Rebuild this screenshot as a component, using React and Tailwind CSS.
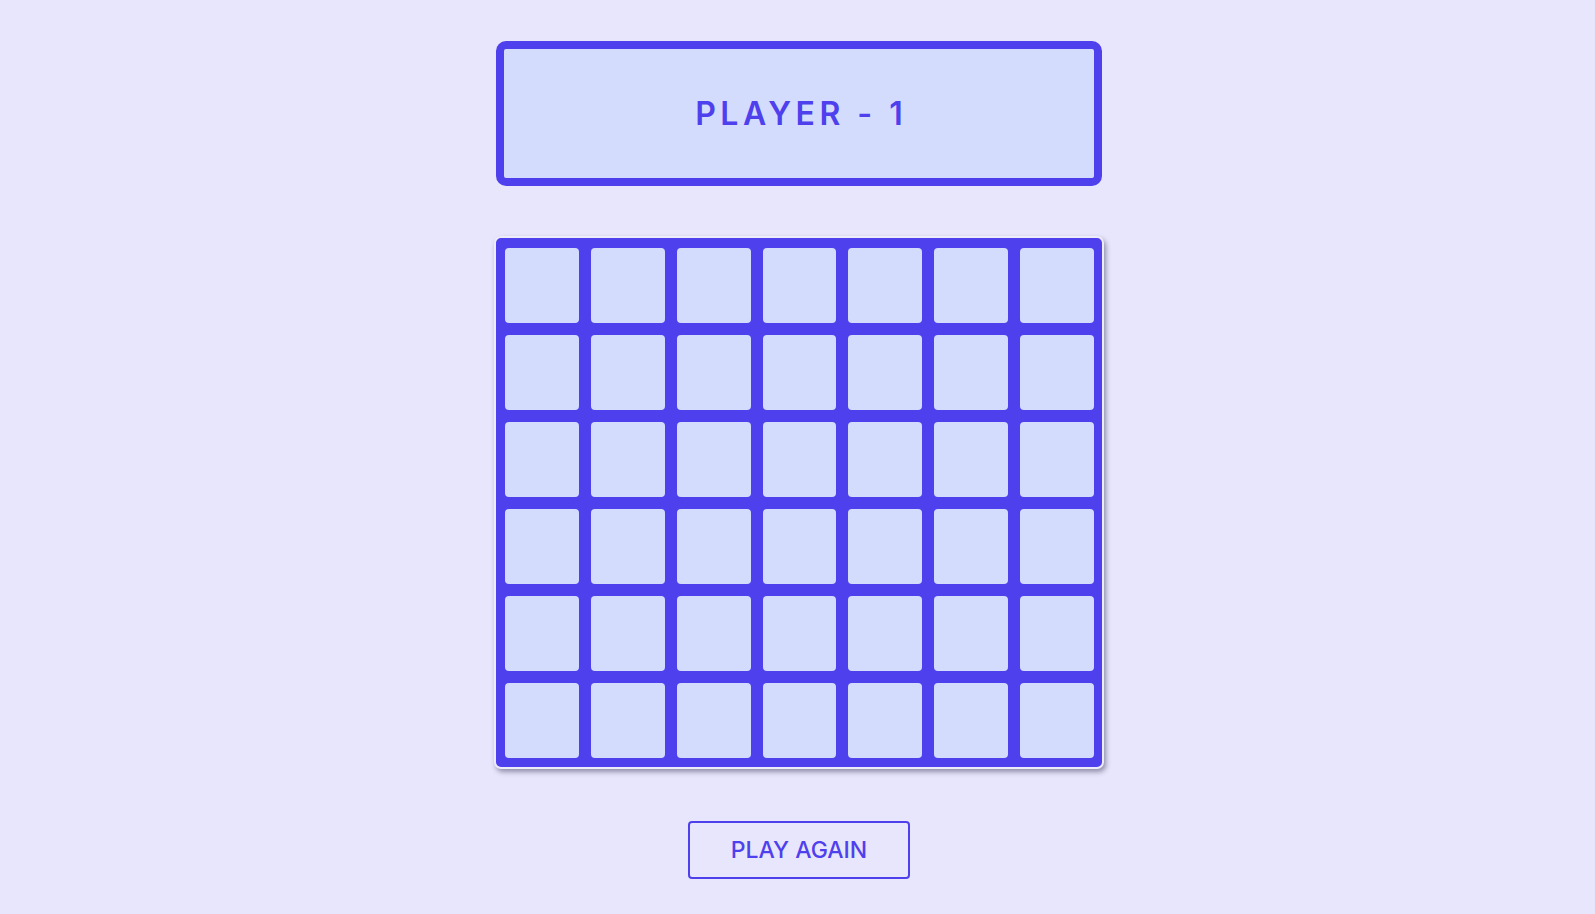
import React from "react";

const ROWS = 6;
const COLS = 7;

function Cell() {
  return <div className="h-[75px] rounded-[4px] bg-[#d4dcfe]" />;
}

export default function App() {
  const cells = Array.from({ length: ROWS * COLS }, (_, i) => i);
  return (
    <div
      className="flex min-h-[914px] w-full flex-col items-center bg-[#e8e6fc] pt-[41px] pl-[3px]"
      style={{ fontFamily: "Inter, 'Open Sans', sans-serif" }}
    >
      {/* turn banner */}
      <div className="flex h-[145px] w-[606px] items-center justify-center rounded-[10px] border-8 border-[#4f40ee] bg-[#d4dcfe]">
        <h1 className="pl-[0.14em] text-[32px] font-semibold tracking-[0.14em] text-[#4f40ee]">
          PLAYER - 1
        </h1>
      </div>

      {/* board */}
      <div className="mt-[50px] rounded-[7px] border-2 border-[#eeecfa] bg-[#4f40ee] pt-[10px] pr-[8px] pb-[9px] pl-[9px] shadow-[2px_3px_5px_rgba(40,40,70,0.45)]">
        <div className="grid w-[589px] grid-cols-7 gap-3">
          {cells.map((i) => (
            <Cell key={i} />
          ))}
        </div>
      </div>

      <button className="mt-[52px] h-[58px] w-[222px] rounded-[4px] border-2 border-[#4f40ee] bg-transparent text-[23px] font-medium text-[#4f40ee]">
        PLAY AGAIN
      </button>
    </div>
  );
}
